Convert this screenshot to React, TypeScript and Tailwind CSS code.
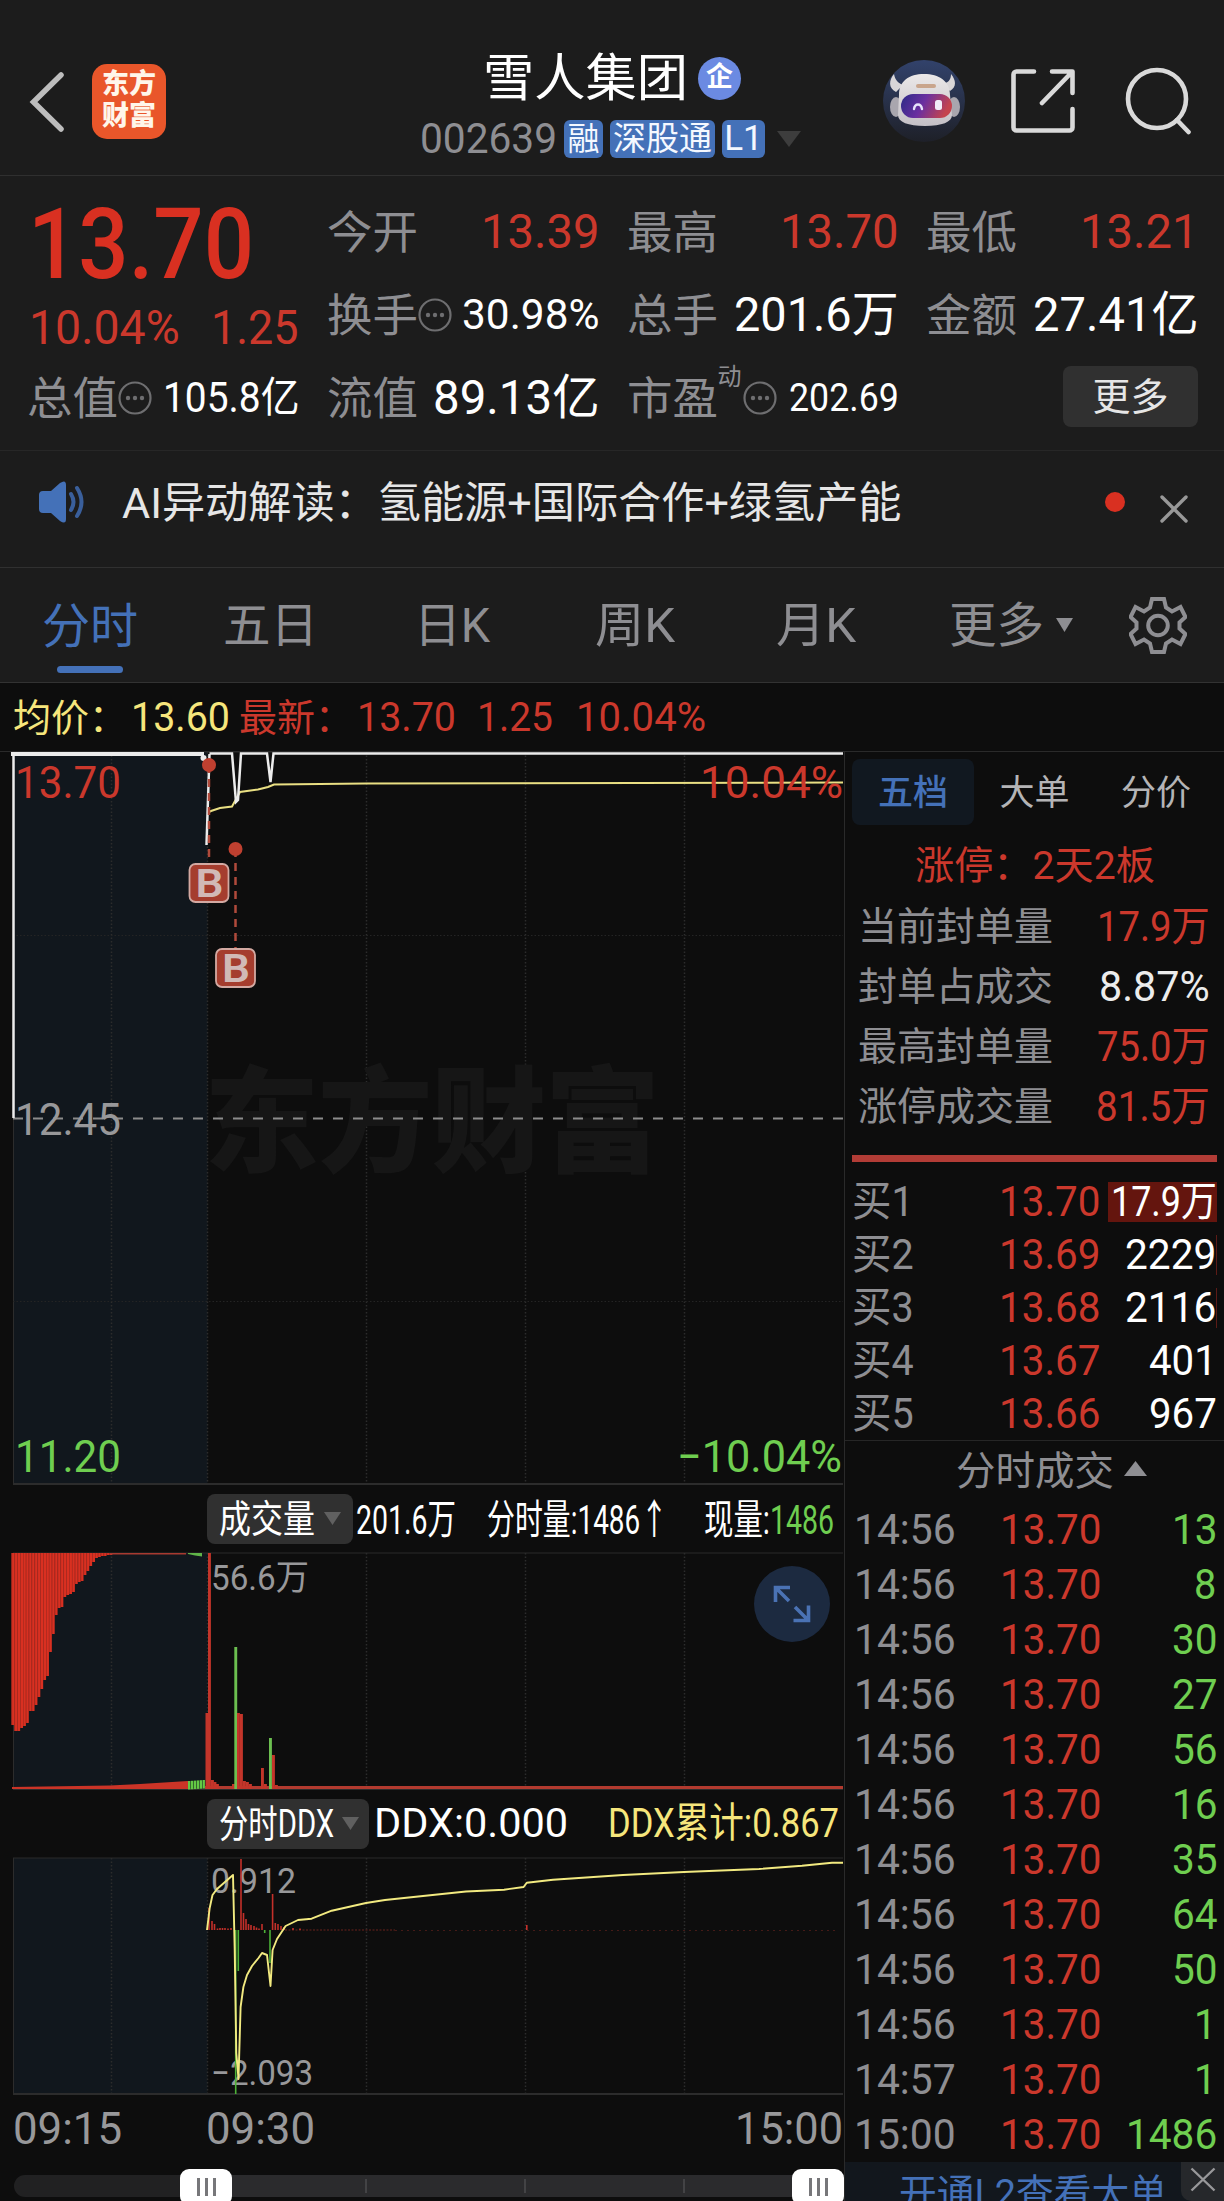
import { useLayoutEffect, useRef, type ReactNode } from 'react';
import { X } from 'lucide-react';

/** Text squeezed or stretched horizontally so that it fills exactly `w` pixels. */
function Fit({ w, className = '', children }: { w: number; className?: string; children: ReactNode }) {
  const inner = useRef<HTMLSpanElement>(null);

  useLayoutEffect(() => {
    const el = inner.current;
    if (!el) return;
    el.style.transform = `scaleX(${w / el.offsetWidth})`;
  });

  return (
    <span className={`block shrink-0 whitespace-nowrap leading-none ${className}`} style={{ width: w }}>
      <span ref={inner} className="inline-block origin-left">
        {children}
      </span>
    </span>
  );
}

function Caret({ className = '' }: { className?: string }) {
  return (
    <svg viewBox="0 0 10 8" preserveAspectRatio="none" className={`shrink-0 ${className}`}>
      <path d="M0 0h10L5 8z" fill="currentColor" />
    </svg>
  );
}

function InfoDot() {
  return (
    <svg viewBox="0 0 34 34" className="h-[34px] w-[34px] shrink-0 text-[#6e6e70]">
      <circle cx="17" cy="17" r="15.5" fill="none" stroke="currentColor" strokeWidth="2.2" />
      <circle cx="10" cy="17" r="2.2" fill="currentColor" />
      <circle cx="17" cy="17" r="2.2" fill="currentColor" />
      <circle cx="24" cy="17" r="2.2" fill="currentColor" />
    </svg>
  );
}

function Robot() {
  return (
    <svg viewBox="0 0 82 82" className="h-[82px] w-[82px]">
      <defs>
        <linearGradient id="robotBg" x1="0" y1="0" x2="0" y2="1">
          <stop offset="0" stopColor="#32426b" />
          <stop offset="1" stopColor="#1e2028" />
        </linearGradient>
        <linearGradient id="visor" x1="0" y1="0" x2="1" y2="0.25">
          <stop offset="0" stopColor="#2b2a86" />
          <stop offset="0.5" stopColor="#6a2fa0" />
          <stop offset="1" stopColor="#c4444e" />
        </linearGradient>
        <linearGradient id="shell" x1="0" y1="0" x2="0" y2="1">
          <stop offset="0" stopColor="#ebe8e8" />
          <stop offset="1" stopColor="#c4c0c6" />
        </linearGradient>
      </defs>
      <circle cx="41" cy="41" r="41" fill="url(#robotBg)" />
      <path d="M11 14c-5 6-6 14 2 18l7-7c-5-2-8-5-9-11zM68 14c5 6 6 13-1 17l-8-7c6-1 9-4 9-10z" fill="#d9d6d8" />
      <ellipse cx="13" cy="47" rx="6" ry="10" fill="#a9a6ae" />
      <ellipse cx="71" cy="47" rx="6" ry="10" fill="#a9a6ae" />
      <path d="M16 35c0-14 10-21 25-21s26 7 26 21l2 20c0 7-10 11-27 11s-27-4-27-11z" fill="url(#shell)" />
      <rect x="33" y="24" width="20" height="4" rx="2" fill="#c9a58c" />
      <rect x="18" y="34" width="51" height="24" rx="12" fill="url(#visor)" />
      <path d="M31 49c1-6 7-6 8 0" fill="none" stroke="#e7e3fb" strokeWidth="2.4" strokeLinecap="round" />
      <rect x="52" y="40" width="7" height="10" rx="2.5" fill="#f1edf7" />
    </svg>
  );
}

function Header() {
  return (
    <header className="flex h-[176px] items-start border-b border-[#2f2f2f] pt-[52px]">
      <svg viewBox="0 0 36 62" className="mt-[19px] ml-[29px] h-[62px] w-9" fill="none" stroke="#bdbdbd" strokeWidth="5.5" strokeLinecap="round" strokeLinejoin="miter">
        <path d="M32 4L4.5 31L32 58" />
      </svg>
      <div className="mt-[12px] ml-[27px] flex h-[75px] w-[74px] flex-col items-center justify-center rounded-[15px] bg-[#e9562a] pb-[3px] text-[27px] leading-[32px] font-black text-[#fff6ea]">
        <span>东方</span>
        <span>财富</span>
      </div>

      <div className="ml-[254px] w-[384px]">
        <div className="flex h-[52px] items-center pl-[63px]">
          <Fit w={205} className="text-[51px] text-white">雪人集团</Fit>
          <span className="ml-[10px] flex h-[43px] w-[43px] items-center justify-center rounded-full bg-[#6b8ae2] pb-px text-[27px] leading-none font-bold text-white">
            企
          </span>
        </div>
        <div className="mt-[15px] flex h-[39px] items-center text-[#f4f8ff]">
          <Fit w={137} className="text-[43px] text-[#8e8e92]">002639</Fit>
          <span className="ml-[7px] flex h-[38px] w-[39px] items-center justify-center rounded-[6px] bg-[#4471b8] text-[32px] leading-none">融</span>
          <span className="ml-[7px] flex h-[38px] w-[105px] items-center justify-center rounded-[6px] bg-[#4471b8] text-[33px] leading-none">深股通</span>
          <span className="ml-[7px] flex h-[38px] w-[43px] items-center justify-center rounded-[6px] bg-[#4471b8] text-[35px] leading-none">L1</span>
          <Caret className="ml-[12px] h-4 w-6 text-[#3d3d3d]" />
        </div>
      </div>

      <div className="mt-[8px] ml-[79px]">
        <Robot />
      </div>
      <svg viewBox="0 0 66 66" className="mt-[16px] ml-[45px] h-[66px] w-[66px]" fill="none" stroke="#d9d9d9" strokeWidth="4.6" strokeLinecap="round" strokeLinejoin="round">
        <path d="M24 3.5H6.5a3 3 0 0 0-3 3v53a3 3 0 0 0 3 3h53a3 3 0 0 0 3-3V41M42 3.5H62.5V25M62 4L32 35" />
      </svg>
      <svg viewBox="0 0 70 70" className="mt-[13px] ml-[48px] h-[70px] w-[70px]" fill="none" stroke="#d9d9d9" strokeWidth="4.6" strokeLinecap="round">
        <circle cx="33" cy="34" r="29" />
        <path d="M53 55L64.5 67" />
      </svg>
    </header>
  );
}

function Quote({ label, hint, extra, value, w, valueClass }: {
  label: string;
  hint?: boolean;
  extra?: string;
  value: string;
  w: number;
  valueClass: string;
}) {
  return (
    <div className="flex items-center justify-between">
      <div className="flex items-center">
        <Fit w={91} className="pt-[3px] text-[45px] text-[#8e8e92]">{label}</Fit>
        {extra && <span className="mb-[42px] w-[25px] text-[24px] leading-none text-[#8e8e92]">{extra}</span>}
        {hint && <InfoDot />}
      </div>
      <Fit w={w} className={`-mr-px ${valueClass}`}>{value}</Fit>
    </div>
  );
}

const UP = 'text-[48px] text-[#cb382c]';
const PLAIN = 'text-[48px] text-white';

function QuotePanel() {
  return (
    <section className="grid h-[275px] grid-cols-4 grid-rows-[83px_83px_83px] gap-x-7 border-b border-[#272727] pt-[14px] pr-[26px] pl-[27px]">
      <div className="row-span-2">
        <Fit w={226} className="mt-[6px] ml-px text-[98px] font-medium text-[#d93021]">13.70</Fit>
        <div className="mt-[10px] ml-[2px] flex justify-between">
          <Fit w={151} className={UP}>10.04%</Fit>
          <Fit w={88} className={UP}>1.25</Fit>
        </div>
      </div>
      <Quote label="今开" value="13.39" w={119} valueClass={`mt-px ${UP}`} />
      <Quote label="最高" value="13.70" w={119} valueClass={`mt-px ${UP}`} />
      <Quote label="最低" value="13.21" w={119} valueClass={`mt-px ${UP}`} />
      <Quote label="换手" hint value="30.98%" w={138} valueClass="text-[43px] text-white" />
      <Quote label="总手" value="201.6万" w={165} valueClass={PLAIN} />
      <Quote label="金额" value="27.41亿" w={166} valueClass={PLAIN} />
      <Quote label="总值" hint value="105.8亿" w={137} valueClass="text-[42px] text-white" />
      <Quote label="流值" value="89.13亿" w={167} valueClass={PLAIN} />
      <Quote label="市盈" extra="动" hint value="202.69" w={110} valueClass="text-[38px] text-white" />
      <button className="-mt-[2px] flex h-[61px] w-[135px] items-center justify-center self-center justify-self-end rounded-[8px] bg-[#303030] text-[38px] leading-none text-[#e6e6e6]">
        更多
      </button>
    </section>
  );
}

function Announcement() {
  return (
    <section className="flex h-[117px] items-center border-b border-[#303030] pb-[14px] pl-[37px]">
      <svg viewBox="0 0 50 46" className="h-[46px] w-[50px]">
        <path d="M2 16q0-4 4-4h8L23 4q6-4 6 2v34q0 6-6 2L14 34H6q-4 0-4-4z" fill="#4471b8" />
        <path d="M34 15q5 8 0 16M40 9q9 14 0 28" fill="none" stroke="#3a5f9b" strokeWidth="4" strokeLinecap="round" />
      </svg>
      <Fit w={780} className="mt-[2px] ml-[35px] text-[43px] text-[#e6e6e6]">AI异动解读：氢能源+国际合作+绿氢产能</Fit>
      <span className="ml-[203px] h-5 w-5 rounded-full bg-[#d93021]" />
      <X className="mt-[13px] ml-[25px] h-[48px] w-[48px] text-[#989898]" strokeWidth={1.7} />
    </section>
  );
}

const PERIODS = [
  { label: '五日', w: 95, pos: 'ml-[85px]' },
  { label: '日K', w: 76, pos: 'ml-[96px]' },
  { label: '周K', w: 80, pos: 'ml-[105px]' },
  { label: '月K', w: 80, pos: 'ml-[101px]' },
  { label: '更多', w: 95, pos: 'ml-[93px]' },
];

function PeriodTabs() {
  return (
    <nav className="flex h-[115px] items-center border-b border-[#323232] pl-[42px] text-[48px] text-[#8e8e92]">
      <div className="flex h-full flex-col items-center pt-[35px] text-[#4471b8]">
        <Fit w={96}>分时</Fit>
        <span className="mt-[15px] h-[7px] w-[66px] rounded-full bg-[#4471b8]" />
      </div>
      {PERIODS.map(p => (
        <Fit key={p.label} w={p.w} className={`pt-px ${p.pos}`}>{p.label}</Fit>
      ))}
      <Caret className="ml-[12px] h-[14px] w-[17px]" />
      <svg viewBox="0 0 58 58" className="ml-[56px] h-[58px] w-[58px]" fill="none" stroke="#8e8e92" strokeWidth="4" strokeLinejoin="miter">
        <path d="M23 3h12l2 8.500 6 4 8.500-4.500 5 10-6 5.500v6l6 5.500-5 10L43 43.500l-6 4L35 56H23l-2-8.500-6-4L6.500 48l-5-10 6-5.500v-6l-6-5.500 5-10 8.500 4.500 6-4z" />
        <circle cx="29" cy="29.5" r="9.8" />
      </svg>
    </nav>
  );
}

function PriceLegend() {
  return (
    <div className="flex h-[69px] items-center border-b border-[#2a2a2a] bg-[#0d0d0d] pl-[13px] text-[41px] text-[#cb382c]">
      <Fit w={114} className="pt-px text-[38px] text-[#f6e67c]">均价：</Fit>
      <Fit w={99} className="ml-[4px] text-[#f6e67c]">13.60</Fit>
      <Fit w={114} className="ml-[9px] pt-px text-[38px]">最新：</Fit>
      <Fit w={99} className="ml-[4px]">13.70</Fit>
      <Fit w={76} className="ml-[21px]">1.25</Fit>
      <Fit w={130} className="ml-[23px]">10.04%</Fit>
    </div>
  );
}

const GRID_X = [111.5, 207.5, 366.5, 525.5, 684.5];

/** Opening auction background, frame and dotted verticals shared by the three charts. */
function Frame({ top, bottom }: { top: number; bottom: number }) {
  return (
    <g>
      <rect x="13" y={top} width="194.5" height={bottom - top} fill="#11171d" />
      {GRID_X.map(x => (
        <line key={x} x1={x} x2={x} y1={top} y2={bottom} stroke="#2c2c2c" strokeWidth="1.5" strokeDasharray="1.5 2" />
      ))}
      <line x1="13.5" x2="13.5" y1={top} y2={bottom} stroke="#2c2c2c" />
      <line x1="13" x2="843" y1={top} y2={top} stroke="#2a2a2a" />
      <line x1="13" x2="843" y1={bottom} y2={bottom} stroke="#2c2c2c" strokeWidth="2" />
    </g>
  );
}

function Label({ x, y, w, size, fill, children }: {
  x: number;
  y: number;
  w: number;
  size: number;
  fill: string;
  children: string;
}) {
  return (
    <text x={x} y={y} textLength={w} lengthAdjust="spacingAndGlyphs" fontSize={size} fill={fill}>
      {children}
    </text>
  );
}

function BuyMark({ x, y, top }: { x: number; y: number; top: number }) {
  return (
    <g>
      <line x1={x} x2={x} y1={y} y2={top} stroke="#b04a3b" strokeWidth="2.5" strokeDasharray="8 6" />
      <circle cx={x} cy={y} r="7" fill="#bf4030" />
      <rect x={x - 19.5} y={top + 1} width="39" height="38" rx="6" fill="#a53d2e" stroke="#d3a9a2" strokeWidth="1.8" />
      <text x={x - 13.5} y={top + 33.5} textLength="28" lengthAdjust="spacingAndGlyphs" fontSize="38" fontWeight="600" fill="#d1b9b6">
        B
      </text>
    </g>
  );
}

function PriceChart() {
  return (
    <svg viewBox="0 752 844 733" className="block h-[733px] w-[844px]">
      <Frame top={752} bottom={1484} />
      <text x="204" y="1163" textLength="456" fontSize="115" fontWeight="900" fill="#161616">东方财富</text>
      <path d="M13 935.5H843M13 1301.5H843" stroke="#242424" strokeDasharray="1.5 2" />
      <path d="M13 1118.5H843" stroke="#8c8c8c" strokeWidth="2" strokeDasharray="10 10" />
      <path d="M209 812L211 811L220 808L232 806.5L235 801L240 792L258 789.5L268 787L274 784.5L366 783.5L843 782.5" fill="none" stroke="#e9df83" strokeWidth="2" />
      <path d="M13.5 1118V754H204M209.5 754L206.500 845M209.5 753.5H232L236 802L238 800L241 753.5H267L270.5 782L273.5 753.5H843" fill="none" stroke="#ececec" strokeWidth="2.5" />
      <path d="M11 754H204" stroke="#ececec" strokeWidth="4" />
      <circle cx="203.5" cy="758" r="3" fill="#ececec" />
      <BuyMark x={209} y={765} top={863} />
      <BuyMark x={235.5} y={849} top={948} />
      <Label x={15} y={798} w={106} size={45} fill="#cb382c">13.70</Label>
      <Label x={15} y={1135} w={106} size={45} fill="#98989a">12.45</Label>
      <Label x={15} y={1472} w={106} size={45} fill="#6fce50">11.20</Label>
      <Label x={700} y={798} w={143} size={45} fill="#cb382c">10.04%</Label>
      <Label x={677} y={1472} w={165} size={45} fill="#6fce50">−10.04%</Label>
    </svg>
  );
}

// unmatched auction orders, one bar per slot, hanging from the top edge
const AUCTION = [
  172, 178, 178, 175, 173, 170, 158, 158, 152, 144, 136, 127, 123, 99, 81, 62, 55, 54, 44, 42, 41, 39,
  31, 29, 28, 22, 18, 13, 9, 5, 4, 3, 3, 2, 2,
];
const STEP = 2.88;

const VOLUME: { x: number; h: number; down?: boolean }[] = [
  { x: 205.5, h: 76 },
  { x: 208, h: 236 },
  { x: 211, h: 9 },
  { x: 213.5, h: 7 },
  { x: 216, h: 5 },
  { x: 232, h: 5 },
  { x: 234.3, h: 142, down: true },
  { x: 237, h: 76 },
  { x: 240, h: 75 },
  { x: 243, h: 8 },
  { x: 246, h: 7 },
  { x: 249, h: 5 },
  { x: 261, h: 21 },
  { x: 264, h: 5 },
  { x: 269, h: 51, down: true },
  { x: 272, h: 34 },
  { x: 275, h: 4 },
];

function VolumeChart() {
  const base = 1789;
  return (
    <svg viewBox="0 1552 844 238" className="block h-[238px] w-[844px]">
      <Frame top={1553} bottom={1789} />
      {AUCTION.map((h, i) => (
        <g key={i}>
          <rect x={11.5 + i * STEP} y="1553" width={STEP} height={h} fill="#d93021" />
          <rect x={11.5 + i * STEP} y="1553" width="0.7" height={h} fill="#a82a20" />
        </g>
      ))}
      <rect x="110" y="1553" width="76" height="1.5" fill="#a83a30" />
      <path d="M188 1553H202V1556.5L195 1555.5L188 1554z" fill="#5fb448" />
      <path d="M12 1789V1787L110 1785.500L140 1784L188 1781V1789z" fill="#cb3427" />
      {Array.from({ length: 6 }, (_, i) => (
        <rect key={i} x={188 + i * 2.9} y={1781 - i * 0.2} width="2.4" height="8.5" fill="#63c944" />
      ))}
      <path d="M205 1787.5H843" stroke="#b23a2f" strokeWidth="3" />
      {VOLUME.map(b => (
        <rect key={b.x} x={b.x} y={base - b.h} width="2.9" height={b.h} fill={b.down ? '#6cbf50' : '#c4352a'} />
      ))}
      <Label x={211} y={1590} w={98} size={35} fill="#98989a">56.6万</Label>
      <circle cx="792" cy="1604" r="38" fill="#1c2a40" />
      <path d="M775.5 1602V1587.500H790M776 1588L789 1601M795 1607L808 1620M793.5 1620.500H808.500V1605.500" fill="none" stroke="#4a72b4" strokeWidth="3.6" />
    </svg>
  );
}

const DDX_LINE =
  'M207 1930L209.7 1908L212.5 1895L217 1889L233 1875L234.7 1950L236.3 2053L238.5 2079L240.6 2007L243.4 1987L247 1975L252 1966L258.5 1958L262 1953L267 1955L270.5 1986L272.6 1950L277 1939L285.6 1926L298 1920L311.6 1918.7L331.7 1910.7L366 1903L385 1900L423 1896L466 1891.5L504 1889.7L523.6 1887L526.8 1882.7L553 1879.7L623 1875L684 1872L759 1869L802 1865.7L832 1862.7H843';

// [x, height]; negative values hang below the zero line
const DDX_BARS: [number, number][] = [
  [209, 22], [212, 9], [214.5, 6], [217.5, 1.5], [220, 2], [222.5, 2], [225, 2], [228, 1.5], [231, 2],
  [235.7, -164], [238.3, -41], [241, 71], [243.5, 17], [246, 11], [248.5, 6], [251, 5], [254, 4], [256.5, 2.5],
  [259, 1.5], [262, 6], [264.7, -3], [270, -33], [272.6, 36], [275.3, 7], [278, 6], [281, 4], [284, 3],
  [293, 2], [300, 1.5], [526.8, 5],
];

function DdxChart() {
  return (
    <svg viewBox="0 1857 844 239" className="block h-[239px] w-[844px]">
      <Frame top={1858} bottom={2094} />
      <path d="M285 1930H395" stroke="#6b221c" strokeDasharray="2 1.5" />
      <path d="M395 1930.5H836" stroke="#451a17" strokeDasharray="2 4" />
      <Label x={211} y={1893} w={85} size={35} fill="#98989a">0.912</Label>
      <Label x={211} y={2085} w={102} size={35} fill="#98989a">−2.093</Label>
      {DDX_BARS.map(([x, h]) => (
        <line key={x} x1={x} x2={x} y1="1930" y2={1930 - h} stroke={h < 0 ? '#4cb238' : '#c4302a'} strokeWidth="1.6" />
      ))}
      <path d={DDX_LINE} fill="none" stroke="#f2ea80" strokeWidth="1.9" strokeLinejoin="round" />
    </svg>
  );
}

function Handle() {
  return (
    <div className="flex h-[36px] w-[52px] shrink-0 items-center justify-center gap-[5px] rounded-[9px] bg-white">
      <span className="h-[18px] w-[3px] bg-[#77777a]" />
      <span className="h-[18px] w-[3px] bg-[#77777a]" />
      <span className="h-[18px] w-[3px] bg-[#77777a]" />
    </div>
  );
}

function RangeSlider() {
  return (
    <div className="flex h-[41px] items-start overflow-hidden pt-[9px] pl-[14px]">
      <div className="mt-[6px] h-[22px] w-[166px] rounded-l-full bg-[#212122]" />
      <Handle />
      <div className="mt-[6px] flex h-[22px] w-[560px] items-center bg-[#2b2b2d]">
        <span className="ml-[133px] h-[14px] w-[2px] bg-[#434345]" />
        <span className="ml-[157px] h-[14px] w-[2px] bg-[#434345]" />
        <span className="ml-[157px] h-[14px] w-[2px] bg-[#434345]" />
      </div>
      <Handle />
    </div>
  );
}

function Charts() {
  return (
    <div className="flex w-[844px] flex-col">
      <PriceChart />
      <div className="flex h-[67px] items-center pl-[207px] text-[41px] text-white">
        <div className="flex h-[50px] w-[146px] items-center rounded-[8px] bg-[#303030]">
          <Fit w={96} className="ml-[12px] text-[38px]">成交量</Fit>
          <Caret className="ml-[9px] h-[13px] w-[17px] text-[#606060]" />
        </div>
        <Fit w={100} className="mt-[3px] ml-[3px]">201.6万</Fit>
        <Fit w={181} className="mt-[3px] ml-[31px]">分时量:1486↑</Fit>
        <Fit w={66} className="mt-[3px] ml-[36px]">现量:</Fit>
        <Fit w={64} className="mt-[3px]">
          <span className="text-[#6fce50]">1486</span>
        </Fit>
      </div>
      <VolumeChart />
      <div className="flex h-[67px] items-center pl-[207px] text-[41px] text-white">
        <div className="flex h-[50px] w-[162px] items-center rounded-[8px] bg-[#303030]">
          <Fit w={115} className="ml-[12px] text-[38px]">分时DDX</Fit>
          <Caret className="ml-[8px] h-[13px] w-[17px] text-[#606060]" />
        </div>
        <Fit w={194} className="ml-[5px]">DDX:0.000</Fit>
        <Fit w={231} className="ml-[40px] text-[#f6e67c]">DDX累计:0.867</Fit>
      </div>
      <DdxChart />
      <div className="flex h-[64px] items-center pl-[13px] text-[45px] text-[#98989a]">
        <Fit w={109}>09:15</Fit>
        <Fit w={109} className="ml-[84px]">09:30</Fit>
        <Fit w={108} className="ml-[420px]">15:00</Fit>
      </div>
      <RangeSlider />
    </div>
  );
}

const LIMIT_STATS = [
  { label: '当前封单量', value: '17.9万', w: 113, cls: 'text-[#cb382c]' },
  { label: '封单占成交', value: '8.87%', w: 111, cls: 'text-[#ececec]' },
  { label: '最高封单量', value: '75.0万', w: 113, cls: 'text-[#cb382c]' },
  { label: '涨停成交量', value: '81.5万', w: 114, cls: 'text-[#cb382c]' },
];

const BIDS = [
  { name: '买1', price: '13.70', vol: '17.9万', w: 106, box: 'bg-[#64150e]' },
  { name: '买2', price: '13.69', vol: '2229', w: 91, box: 'border-r border-[#5c1b16]' },
  { name: '买3', price: '13.68', vol: '2116', w: 91, box: 'border-r border-[#5c1b16]' },
  { name: '买4', price: '13.67', vol: '401', w: 68, box: '' },
  { name: '买5', price: '13.66', vol: '967', w: 68, box: '' },
];

const TRADES = [
  ['14:56', '13'],
  ['14:56', '8'],
  ['14:56', '30'],
  ['14:56', '27'],
  ['14:56', '56'],
  ['14:56', '16'],
  ['14:56', '35'],
  ['14:56', '64'],
  ['14:56', '50'],
  ['14:56', '1'],
  ['14:57', '1'],
  ['15:00', '1486'],
];

function OrderBook() {
  return (
    <aside className="flex h-[1449px] flex-1 flex-col border-l border-[#2a2a2a]">
      <div className="mt-[7px] ml-[7px] flex h-[66px] shrink-0 text-[35px] leading-none text-[#b4b4b6]">
        <div className="flex w-[122px] items-center justify-center rounded-[8px] bg-[#111820] pt-[2px] font-medium text-[#4471b8]">五档</div>
        <div className="flex w-[121px] items-center justify-center pt-[2px]">大单</div>
        <div className="flex w-[122px] items-center justify-center pt-[2px]">分价</div>
      </div>

      <div className="mt-[11px] flex h-[60px] shrink-0 items-center justify-center">
        <Fit w={240} className="text-[39px] text-[#cb382c]">涨停：2天2板</Fit>
      </div>
      {LIMIT_STATS.map(s => (
        <div key={s.label} className="flex h-[60px] shrink-0 items-center justify-between pr-[14px] pl-[13px]">
          <Fit w={195} className="pt-[2px] text-[39px] text-[#8e8e92]">{s.label}</Fit>
          <Fit w={s.w} className={`pt-px text-[42px] ${s.cls}`}>{s.value}</Fit>
        </div>
      ))}

      <div className="mt-[19px] mr-[7px] ml-[7px] h-[7px] shrink-0 bg-[#b23c36]" />

      <div className="mt-[13px] shrink-0">
        {BIDS.map(b => (
          <div key={b.name} className="flex h-[53px] items-center pl-[7px] text-[42px]">
            <Fit w={62} className="text-[#8e8e92]">{b.name}</Fit>
            <Fit w={102} className="ml-[85px] text-[#cb382c]">{b.price}</Fit>
            <div className={`ml-[7px] flex h-[40px] w-[109px] items-center justify-end text-white ${b.box}`}>
              <Fit w={b.w}>{b.vol}</Fit>
            </div>
          </div>
        ))}
      </div>

      <div className="flex h-[62px] shrink-0 items-center border-t border-[#262626] pl-[111px] text-[#8e8e92]">
        <Fit w={158} className="text-[40px]">分时成交</Fit>
        <Caret className="mb-[6px] ml-[10px] h-[15px] w-[23px] rotate-180" />
      </div>
      {TRADES.map(([time, vol], i) => (
        <div key={i} className="flex h-[55px] shrink-0 items-center pl-[9px] text-[42px]">
          <Fit w={102} className="text-[#8e8e92]">{time}</Fit>
          <Fit w={102} className="ml-[44px] text-[#cb382c]">13.70</Fit>
          <div className="flex w-[115px] justify-end text-[#6fce50]">
            <Fit w={vol.length * 22.7}>{vol}</Fit>
          </div>
        </div>
      ))}

      {/* bottom bar continues below the fold */}
      <div className="flex h-[39px] shrink-0 items-start bg-[#12171d]">
        <Fit w={268} className="mt-[13px] ml-[54px] text-[39px] text-[#4471b8]">开通L2查看大单</Fit>
        <div className="ml-auto flex h-[39px] w-[43px] justify-center rounded-bl-[10px] bg-[#26282b] pt-[5px]">
          <svg viewBox="0 0 26 25" className="h-[25px] w-[26px]" stroke="#98989a" strokeWidth="2.4">
            <path d="M1.500 1.500L24.500 23.500M24.500 1.500L1.500 23.500" />
          </svg>
        </div>
      </div>
    </aside>
  );
}

export default function App() {
  return (
    <div className="h-[2201px] w-[1224px] overflow-hidden bg-[#1c1c1c] font-[Roboto,'Noto_Sans_CJK_SC',sans-serif]">
      <Header />
      <QuotePanel />
      <Announcement />
      <PeriodTabs />
      <PriceLegend />
      <main className="flex h-[1449px] bg-[#0d0d0d]">
        <Charts />
        <OrderBook />
      </main>
    </div>
  );
}
